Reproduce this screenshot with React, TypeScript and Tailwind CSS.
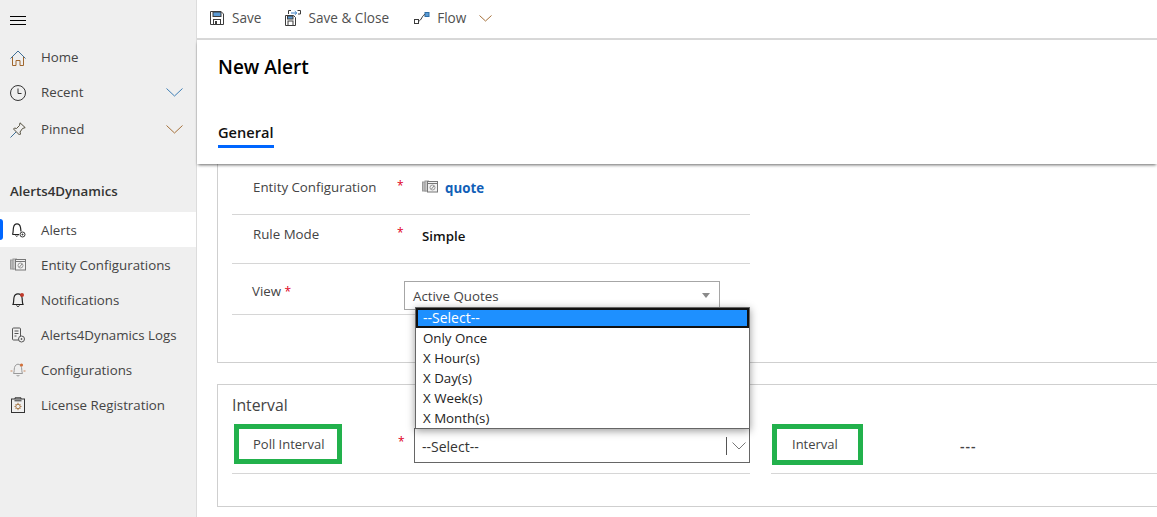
import type { ReactNode } from 'react'

const font = { fontFamily: '"Open Sans", "Noto Sans", sans-serif' }

const Thin = ({ children, size = 16, box = 16 }: { children: ReactNode; size?: number; box?: number }) => (
  <svg width={size} height={size} viewBox={`0 0 ${box} ${box}`} fill="none" stroke="#444" strokeWidth="1" className="shrink-0">
    {children}
  </svg>
)

const Chevron = ({ color = '#6b8296' }: { color?: string }) => (
  <svg width="17" height="9" viewBox="0 0 17 9" fill="none" stroke={color} strokeWidth="1" className="shrink-0">
    <path d="M0.5 0.5 L8.5 8 L16.5 0.5" />
  </svg>
)

const HomeIcon = () => (
  <Thin>
    <path d="M0.5 8.5 L8 1 L15.5 8.5" stroke="#3f6f96" />
    <path d="M2.5 7 V15.5 H6 V10.5 H10 V15.5 H13.5 V7" stroke="#a0672e" />
  </Thin>
)

const ClockIcon = () => (
  <Thin>
    <circle cx="8" cy="8" r="7.5" stroke="#333" />
    <path d="M8 3.5 V8.5 H11.5" stroke="#333" />
  </Thin>
)

const PinIcon = () => (
  <Thin>
    <path d="M10 0.8 L15.2 5.6 L12.5 6.5 L10 10 L10.5 12 L9.5 13 L3.5 7 L4.5 6 L6.5 6.5 L9.5 3.5 Z" stroke="#55503f" />
    <path d="M0.5 15.5 L6 10" stroke="#3f6f96" />
  </Thin>
)

const BellIcon = ({ dot }: { dot?: string }) => (
  <Thin>
    <path d="M3 12.5 C4 10 3.5 8 4 5.5 C4.5 3 6 1.8 8 1.8 C10 1.8 11.5 3 12 5.5 C12.5 8 12 10 13 12.5 Z" stroke="#222" strokeWidth="1.2" />
    <path d="M6.5 13.5 C7 14.8 9 14.8 9.5 13.5" stroke="#222" />
    {dot && <circle cx="12" cy="3" r="2" fill={dot} stroke="none" />}
  </Thin>
)

const AlertBell = () => (
  <Thin>
    <path d="M2.5 12.5 C3.5 10 3 8 3.5 5.5 C4 3 5.5 1.8 7 1.8 C8.5 1.8 10 3 10.5 5.5 C10.8 7 10.8 8.5 11 9.5" stroke="#222" strokeWidth="1.2" />
    <path d="M2.5 12.5 H9 M5.5 13.5 C6 14.5 7.5 14.5 8 13.5" stroke="#222" />
    <circle cx="12.5" cy="12.5" r="2.5" stroke="#333" />
    <path d="M12.5 11.5 V13.5 M11.5 12.5 H13.5" stroke="#333" strokeWidth="0.8" />
  </Thin>
)

const EntityIcon = ({ size = 16 }: { size?: number }) => (
  <Thin size={size}>
    <rect x="0.5" y="3" width="3.5" height="9" fill="#bbb" stroke="#999" />
    <rect x="3" y="2" width="3.5" height="10" fill="#ccc" stroke="#999" />
    <rect x="5.5" y="2.5" width="10" height="10.5" fill="#f2f2f2" stroke="#777" />
    <path d="M5.5 4.5 H15.5" stroke="#777" />
    <circle cx="10.5" cy="8.5" r="2.5" stroke="#999" />
    <path d="M9.5 10 L12 7" stroke="#888" />
  </Thin>
)

const LogIcon = () => (
  <Thin>
    <rect x="2.5" y="1" width="8" height="12" rx="1" stroke="#555" />
    <path d="M4.5 4 H8.5 M4.5 6.5 H8.5 M4.5 9 H6.5" stroke="#555" />
    <circle cx="11.5" cy="12" r="3" fill="#efefef" stroke="#555" />
    <path d="M11.5 11 V13 M10.5 12 H12.5" stroke="#555" strokeWidth="0.8" />
  </Thin>
)

const ConfigBell = () => (
  <Thin>
    <path d="M3.5 11.5 C4.5 9.5 4 7.5 4.5 5.5 C5 3.5 6.5 2.2 8 2.2 C9.5 2.2 11 3.5 11.5 5.5 C12 7.5 11.5 9.5 12.5 11.5 Z" stroke="#999" />
    <path d="M6.5 13 C7 14.3 9 14.3 9.5 13" stroke="#999" />
    <path d="M0.5 9 H2.5 M13.5 9 H15.5" stroke="#c98a60" />
    <circle cx="11.5" cy="3" r="1.6" fill="#d2703a" stroke="none" />
  </Thin>
)

const LicenseIcon = () => (
  <Thin>
    <rect x="1.5" y="2" width="13" height="13.5" stroke="#333" />
    <path d="M5 2 V0.8 H11 V2 M4.5 3.8 H11.5" stroke="#333" />
    <circle cx="8" cy="9.5" r="2.2" stroke="#a87a4a" />
    <path d="M8 5.8 V7 M8 12 V13.2 M4.5 9.5 H5.8 M10.2 9.5 H11.5 M5.6 7.2 L6.4 8 M9.6 11 L10.4 11.8 M10.4 7.2 L9.6 8 M6.4 11 L5.6 11.8" stroke="#a87a4a" />
  </Thin>
)

const SaveIcon = () => (
  <Thin size={14} box={14}>
    <path d="M0.5 0.5 H11 L13.5 3 V13.5 H0.5 Z" stroke="#3c3c3c" />
    <rect x="3" y="1" width="8" height="4.5" fill="#5b9bd5" stroke="#3c3c3c" />
    <rect x="3.5" y="8.5" width="7" height="5" stroke="#3c3c3c" />
    <rect x="5" y="10" width="2" height="3.5" fill="#3c3c3c" stroke="none" />
  </Thin>
)

const SaveCloseIcon = () => (
  <Thin>
    <path d="M0.5 5.5 H8.5 L10.5 7.5 V15.5 H0.5 Z" stroke="#3c3c3c" />
    <rect x="2.5" y="6" width="5.5" height="3" fill="#5b9bd5" stroke="#3c3c3c" />
    <rect x="3" y="11" width="5" height="4.5" stroke="#3c3c3c" />
    <path d="M3.5 4 V0.5 H6 M12.5 0.5 H15.5 V4 H13" stroke="#3c3c3c" />
    <path d="M6 3 H11.5 M9.8 1.2 L11.8 3 L9.8 4.8" stroke="#3b7fc4" />
  </Thin>
)

const FlowIcon = () => (
  <Thin>
    <rect x="0.5" y="9.5" width="4" height="4" stroke="#3c3c3c" />
    <rect x="11" y="2.5" width="4" height="4" fill="#5b9bd5" stroke="#2f6ea5" />
    <path d="M4.5 11 C7.5 11 8 5 11 4.5" stroke="#3c3c3c" />
  </Thin>
)

const navTop = [
  { label: 'Home', icon: <HomeIcon />, h: 'h-[35px]' },
  { label: 'Recent', icon: <ClockIcon />, h: 'h-[35px]', chevron: '#3f7fb5' },
  { label: 'Pinned', icon: <PinIcon />, h: 'h-[39px]', chevron: '#a5703a' },
]

const navArea = [
  { label: 'Alerts', icon: <AlertBell />, active: true },
  { label: 'Entity Configurations', icon: <EntityIcon /> },
  { label: 'Notifications', icon: <BellIcon dot="#c0392b" /> },
  { label: 'Alerts4Dynamics Logs', icon: <LogIcon /> },
  { label: 'Configurations', icon: <ConfigBell /> },
  { label: 'License Registration', icon: <LicenseIcon /> },
]

const options = ['Only Once', 'X Hour(s)', 'X Day(s)', 'X Week(s)', 'X Month(s)']

const Star = () => <span className="w-[7px] shrink-0 text-[12px] text-[#e0001b]">*</span>

export default function App() {
  return (
    <div style={font} className="flex h-[517px] w-full overflow-hidden bg-white text-[13.3px] text-[#444]">
      <aside className="flex w-[197px] shrink-0 flex-col border-r border-[#dcdcdc] bg-[#efefef]">
        <div className="flex h-[40px] items-center pl-[10px]">
          <div className="flex w-[16px] flex-col gap-[3px]">
            <span className="h-px bg-black" />
            <span className="h-px bg-black" />
            <span className="h-px bg-black" />
          </div>
        </div>
        {navTop.map((item) => (
          <div key={item.label} className={`flex items-center pl-[10px] pr-[13px] ${item.h}`}>
            {item.icon}
            <span className="ml-[15px] flex-1">{item.label}</span>
            {item.chevron && <Chevron color={item.chevron} />}
          </div>
        ))}
        <div className="mt-[32px] mb-[11px] h-[20px] pl-[10px] font-semibold leading-[20px] text-[#333]">
          Alerts4Dynamics
        </div>
        {navArea.map((item) => (
          <div
            key={item.label}
            className={`relative flex h-[35px] items-center pl-[10px] ${item.active ? 'bg-white' : ''}`}
          >
            {item.active && <span className="absolute left-0 top-[7px] h-[21px] w-[3px] rounded-r-sm bg-[#0066ff]" />}
            {item.icon}
            <span className="ml-[15px] pt-[2px]">{item.label}</span>
          </div>
        ))}
      </aside>

      <main className="flex min-w-0 flex-1 flex-col">
        <div className="flex h-[40px] shrink-0 items-center border-b-2 border-[#d8d8d8] pb-[2px] pl-[13px] text-[13.6px] text-[#505050]">
          <SaveIcon />
          <span className="ml-[8px]">Save</span>
          <span className="ml-[24px]"><SaveCloseIcon /></span>
          <span className="ml-[7px]">Save &amp; Close</span>
          <span className="ml-[25px]"><FlowIcon /></span>
          <span className="ml-[7px]">Flow</span>
          <span className="ml-[13px]">
            <svg width="13" height="7" viewBox="0 0 13 7" fill="none" stroke="#a5703a" strokeWidth="1">
              <path d="M0.5 0.5 L6.5 6 L12.5 0.5" />
            </svg>
          </span>
        </div>

        <header className="relative z-[1] h-[124px] shrink-0 pl-[21px] shadow-[0_2px_3px_-1px_rgba(0,0,0,0.6)]">
          <h1 className="pt-[14px] text-[19px] font-semibold leading-[27px] text-black">New Alert</h1>
          <div className="mt-[41px] inline-block border-b-[3px] border-[#0066ff] pb-[3px] text-[14.6px] font-semibold leading-[20px] text-[#111]">
            General
          </div>
        </header>

        <div className="flex-1 pl-[20px]">
          <section className="h-[199px] border-b border-l border-[#cfcfcf] pl-[14px]">
            <div className="flex h-[51px] w-[518px] border-b border-[#d6d6d6] pt-[13px]">
              <span className="ml-[21px] w-[144px] shrink-0 leading-[20px]">Entity Configuration</span>
              <Star />
              <span className="ml-[18px] mt-[2px]"><EntityIcon size={16} /></span>
              <span className="ml-[7px] font-bold leading-[22px] text-[#1160b7]">quote</span>
            </div>
            <div className="flex h-[49px] w-[518px] border-b border-[#d6d6d6] pt-[9px]">
              <span className="ml-[21px] w-[144px] shrink-0 leading-[20px]">Rule Mode</span>
              <Star />
              <span className="ml-[18px] mt-[2px] font-semibold leading-[20px] text-[#111]">Simple</span>
            </div>
            <div className="flex h-[51px] w-[518px] border-b border-[#d6d6d6] pt-[17px]">
              <span className="ml-[20px] w-[152px] shrink-0 leading-[20px]">
                View <span className="text-[12px] text-[#e0001b]">*</span>
              </span>
              <div className="flex h-[29px] w-[316px] items-center justify-between border border-[#a6a6a6] pl-[8px] pr-[9px]">
                <span className="pt-[3px]">Active Quotes</span>
                <span className="h-0 w-0 border-x-[4px] border-t-[5px] border-x-transparent border-t-[#8a8a8a]" />
              </div>
            </div>
          </section>

          <section className="mt-[21px] h-[123px] border-b border-l border-t border-[#cfcfcf] pl-[14px]">
            <h2 className="mt-[9px] h-[30px] text-[15.8px] leading-[22px] text-[#444]">Interval</h2>
            <div className="flex">
              <div className="flex h-[50px] w-[518px] border-b border-[#d6d6d6]">
                <div className="ml-[2px] flex h-[40px] w-[108px] shrink-0 items-center border-[5px] border-[#22b14c] pl-[14px] pt-[1px] text-[13px]">
                  Poll Interval
                </div>
                <span className="ml-[56px] mt-[8px] w-[7px] shrink-0"><Star /></span>
                <div className="relative ml-[9px] mt-[4px] flex h-[35px] w-[336px] shrink-0 items-center justify-between border border-[#666] pl-[7px] pr-[3px] text-[14px] text-[#333]">
                  <span className="pt-[1px]">--Select--</span>
                  <span className="flex items-center">
                    <span className="mr-[5px] h-[18px] w-px bg-[#555]" />
                    <svg width="14" height="8" viewBox="0 0 14 8" fill="none" stroke="#777" strokeWidth="1">
                      <path d="M0.5 0.5 L7 7 L13.5 0.5" />
                    </svg>
                  </span>
                  <div className="absolute bottom-full right-[-1px] z-10 w-[335px] border border-[#666] bg-white text-[#222] shadow-[0_2px_8px_rgba(0,0,0,0.4)]">
                    <div className="h-[20px] border-2 border-[#111] bg-[#1e90ff] pl-[5px] leading-[16px] text-white">
                      --Select--
                    </div>
                    {options.map((option) => (
                      <div key={option} className="h-[20px] pl-[7px] text-[13.3px] leading-[20px]">
                        {option}
                      </div>
                    ))}
                  </div>
                </div>
              </div>
              <div className="ml-[21px] flex h-[50px] flex-1 border-b border-[#d6d6d6]">
                <div className="ml-px flex h-[41px] w-[91px] items-center border-[5px] border-[#22b14c] pl-[15px] text-[13px]">
                  Interval
                </div>
                <span className="ml-[97px] mt-[12px] text-[14px] font-semibold leading-[20px] tracking-[1px]">---</span>
              </div>
            </div>
          </section>
        </div>
      </main>
    </div>
  )
}
